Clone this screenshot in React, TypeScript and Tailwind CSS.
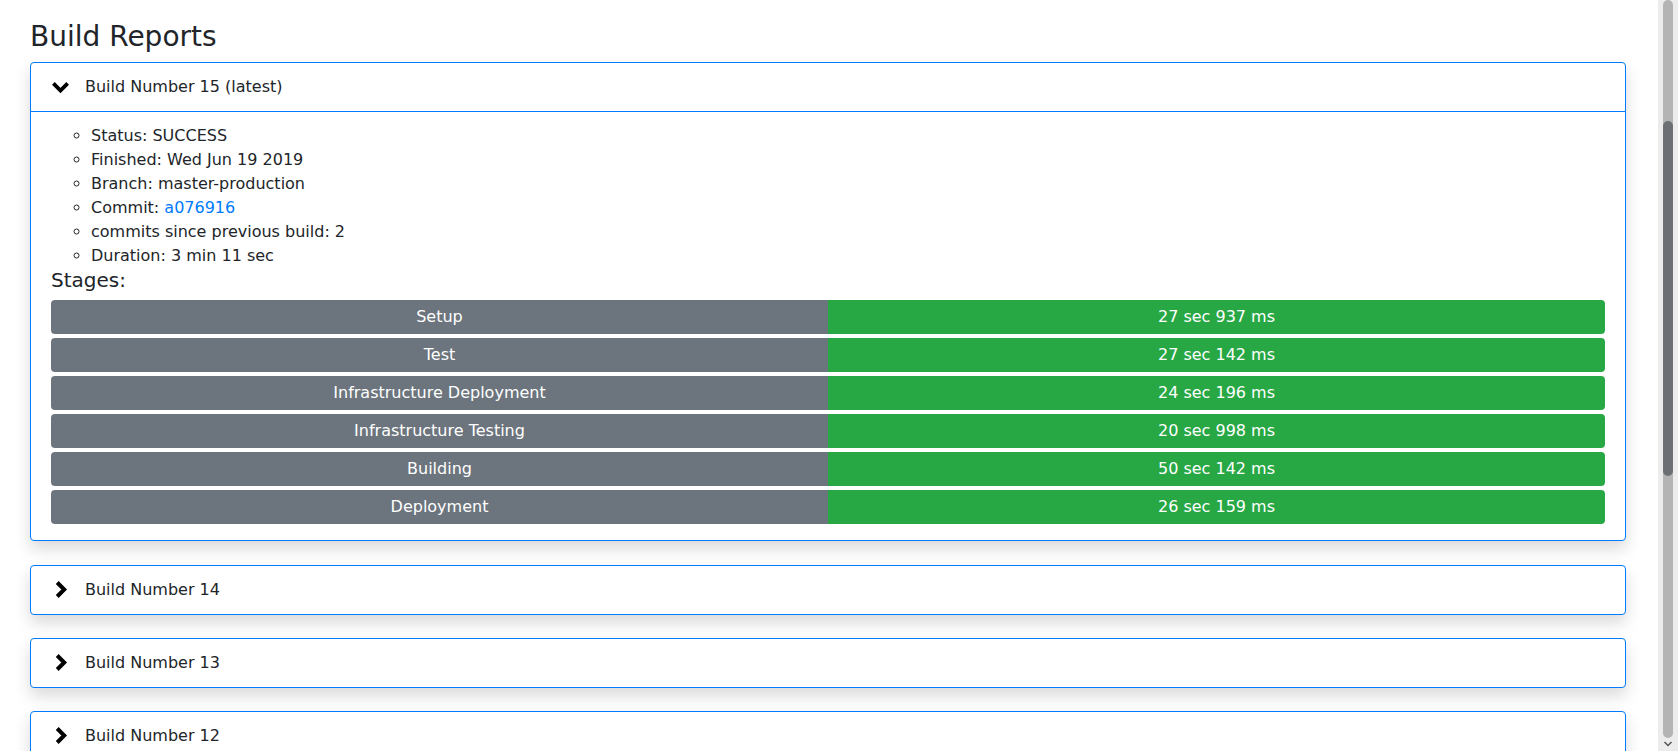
const stages = [
  { name: "Setup", time: "27 sec 937 ms" },
  { name: "Test", time: "27 sec 142 ms" },
  { name: "Infrastructure Deployment", time: "24 sec 196 ms" },
  { name: "Infrastructure Testing", time: "20 sec 998 ms" },
  { name: "Building", time: "50 sec 142 ms" },
  { name: "Deployment", time: "26 sec 159 ms" },
];

const olderBuilds = [14, 13, 12, 11];

function Chevron({ open }: { open: boolean }) {
  if (open) {
    return (
      <svg width="20" height="14" viewBox="0 0 20 14">
        <path d="M2.5 3.2 L10 10.7 L17.5 3.2" fill="none" stroke="#000" strokeWidth="4" />
      </svg>
    );
  }
  return (
    <svg width="14" height="20" viewBox="0 0 14 20">
      <path d="M3.2 2.5 L10.2 9.5 L3.2 16.5" fill="none" stroke="#000" strokeWidth="4" />
    </svg>
  );
}

function CardHeader({ open, label }: { open: boolean; label: string }) {
  return (
    <div className="flex h-[48px] items-center pl-[20px]">
      <span className="flex w-[19px] justify-center">
        <Chevron open={open} />
      </span>
      <span className="ml-[15px]">{label}</span>
    </div>
  );
}

export default function App() {
  return (
    <div className="flex h-[751px] overflow-hidden bg-white font-['DejaVu_Sans',sans-serif] text-[16px] leading-[24px] text-[#212529]">
      <main className="flex-1 pl-[30px] pr-[32px] pt-[20px]">
        <h3 className="mb-[8px] text-[28px] leading-[33.6px]">Build Reports</h3>

        <div className="flex flex-col gap-[23px]">
          {/* latest build, expanded */}
          <div className="mb-[1px] rounded-[4px] border border-[#007bff] bg-white shadow-[0_8px_16px_rgba(0,0,0,0.15)]">
            <div className="border-b border-[#007bff]">
              <CardHeader open label="Build Number 15 (latest)" />
            </div>
            <div className="px-[20px] pb-[16px] pt-[12px]">
              <ul className="list-[circle] pl-[40px]">
                <li>Status: SUCCESS</li>
                <li>Finished: Wed Jun 19 2019</li>
                <li>Branch: master-production</li>
                <li>
                  Commit: <a className="text-[#007bff]">a076916</a>
                </li>
                <li>commits since previous build: 2</li>
                <li>Duration: 3 min 11 sec</li>
              </ul>
              <h5 className="mb-[8px] text-[20px] leading-[24px]">Stages:</h5>
              <div className="flex flex-col gap-[4px]">
                {stages.map((s) => (
                  <div key={s.name} className="flex h-[34px] overflow-hidden rounded-[4px] text-white">
                    <div className="flex w-1/2 items-center justify-center bg-[#6c757d]">{s.name}</div>
                    <div className="flex w-1/2 items-center justify-center bg-[#28a745]">{s.time}</div>
                  </div>
                ))}
              </div>
            </div>
          </div>

          {olderBuilds.map((n) => (
            <div
              key={n}
              className="rounded-[4px] border border-[#007bff] bg-white shadow-[0_8px_16px_rgba(0,0,0,0.15)]"
            >
              <CardHeader open={false} label={`Build Number ${n}`} />
            </div>
          ))}
        </div>
      </main>

      {/* scrollbar */}
      <div className="flex w-[20px] flex-col items-center bg-[#ececec]">
        <div className="flex h-[738px] w-[10px] flex-col rounded-full bg-[#b4b4b4]">
          <div className="h-[121px]" />
          <div className="h-[355px] rounded-full bg-[#6c6f74]" />
        </div>
        <svg width="10" height="8" viewBox="0 0 10 8" className="mt-[2px]">
          <path d="M1.5 2 L5 5.5 L8.5 2" fill="none" stroke="#555" strokeWidth="1.5" />
        </svg>
      </div>
    </div>
  );
}
